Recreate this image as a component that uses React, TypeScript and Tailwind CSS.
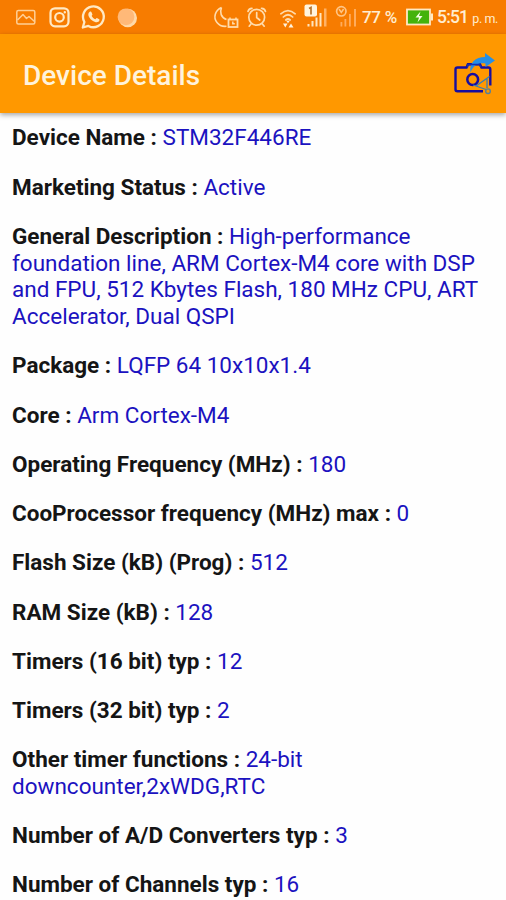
const details = [
  { label: "Device Name", value: "STM32F446RE" },
  { label: "Marketing Status", value: "Active" },
  {
    label: "General Description",
    value:
      "High-performance foundation line, ARM Cortex-M4 core with DSP and FPU, 512 Kbytes Flash, 180 MHz CPU, ART Accelerator, Dual QSPI",
  },
  { label: "Package", value: "LQFP 64 10x10x1.4" },
  { label: "Core", value: "Arm Cortex-M4" },
  { label: "Operating Frequency (MHz)", value: "180" },
  { label: "CooProcessor frequency (MHz) max", value: "0" },
  { label: "Flash Size (kB) (Prog)", value: "512" },
  { label: "RAM Size (kB)", value: "128" },
  { label: "Timers (16 bit) typ", value: "12" },
  { label: "Timers (32 bit) typ", value: "2" },
  { label: "Other timer functions", value: "24-bit downcounter,2xWDG,RTC" },
  { label: "Number of A/D Converters typ", value: "3" },
  { label: "Number of Channels typ", value: "16" },
];

function NotificationIcons() {
  return (
    <svg width="150" height="34" viewBox="0 0 150 34" fill="none" stroke="#ffe9c4" className="shrink-0">
      <g stroke="#ffcf95" strokeWidth="1.5" strokeLinejoin="round">
        <rect x="16.8" y="10.5" width="18" height="13.5" rx="1.5" />
        <path d="M17.5 20l5.5-5.5 3.5 4 2.5-2 5.5 5" />
      </g>
      <g strokeWidth="2.2">
        <rect x="50.5" y="8.3" width="18" height="18" rx="4.5" />
        <circle cx="59.5" cy="17.3" r="4.3" />
        <circle cx="64.8" cy="12.2" r="0.6" strokeWidth="1.2" />
      </g>
      <path d="M82.8 27.5l1.6-5.5a10.4 10.4 0 1 1 4 3.9z" strokeWidth="2.3" strokeLinejoin="round" />
      <path
        d="M89.5 12c.9-.8 1.7-.6 2 .2l.9 2c.2.7-.9 1.3-.7 1.8.8 1.6 2 2.6 3.6 3.2.5.2 1-1.3 1.6-1.1l2.3 1.1c.7.4.1 2-.8 2.6-1.6 1-3.8.3-6.2-1.4-2.2-1.7-4-4-3.9-6 0-1 .5-1.8 1.2-2.4z"
        fill="#ffe9c4"
        stroke="none"
      />
      <circle cx="127.8" cy="18" r="9.2" fill="#ffd9a8" stroke="none" />
      <circle cx="126" cy="16.8" r="8.4" fill="#ffb978" stroke="none" />
    </svg>
  );
}

function ConnectionIcons() {
  return (
    <svg width="146" height="34" viewBox="212 0 146 34" fill="none" stroke="#ffdcac" className="shrink-0">
      <path d="M221.5 7.5C215 10.5 213 17.5 217 22.5q3.5 4.5 9.5 3.8M221.5 7.5c-2 5-.5 10 5 12" strokeWidth="1.6" />
      <rect x="228.5" y="19.5" width="9" height="7.5" strokeWidth="1.8" />
      <path d="M230 17.5v2M236 17.5v2M232.8 21.5v2.2h2" strokeWidth="1.5" />
      <g strokeWidth="1.7" strokeLinecap="round">
        <circle cx="256.7" cy="17.3" r="7.9" />
        <path d="M256.7 12.5v5l3 2.5M248 11.5a4 4 0 0 1 4-3.2M265.5 11.5a4 4 0 0 0-4-3.2M251 24l-1.8 2.2M262.4 24l1.8 2.2" />
        <path d="M280.8 13.8q7.2-6.5 14.4 0M283.3 17q4.7-4.5 9.4 0M285.8 20q2.2-2 4.4 0" />
      </g>
      <path d="M286.2 20.8h3.6l-1.8 2.4zM283 23.5h4.5l-2.2 4zM291 23.5l2.5 4h-5z" fill="#fff2dc" stroke="none" />
      <rect x="304.5" y="4.5" width="12.5" height="12" rx="2" fill="#fff4df" stroke="none" />
      <path d="M309 8.5l2-1v7" stroke="#b8752f" strokeWidth="1.7" />
      <g stroke="none" fill="#ffe5bf">
        <rect x="307.5" y="24" width="2" height="2.5" />
        <rect x="311.5" y="21" width="2" height="5.5" />
        <rect x="315.5" y="17.5" width="2" height="9" />
        <rect x="319.5" y="13" width="2" height="13.5" />
        <rect x="324" y="8.5" width="2.5" height="18" fill="#ffb266" />
      </g>
      <circle cx="341.3" cy="11.3" r="4.7" stroke="#ffc584" strokeWidth="1.7" />
      <path d="M339 9l2.3 3.500 2.3-3.500" stroke="#ffc584" strokeWidth="1.5" />
      <g stroke="none" fill="#ffac5c">
        <rect x="340.5" y="22" width="1.8" height="4.5" />
        <rect x="344.5" y="19" width="1.8" height="7.5" />
        <rect x="349" y="14" width="1.8" height="12.5" />
        <rect x="354" y="9" width="2" height="17.5" />
      </g>
    </svg>
  );
}

function BatteryIcon() {
  return (
    <svg width="28" height="18" viewBox="0 0 28 18" className="shrink-0">
      <rect x="1" y="1.5" width="23" height="15" fill="#43b30b" stroke="#ffe9c4" strokeWidth="1.8" />
      <rect x="25" y="5.5" width="2" height="7" fill="#ffe9c4" />
      <path d="M14.5 3.5l-5 6h3.5l-1.5 5 5-6.5h-3.5z" fill="#f4ffe4" />
    </svg>
  );
}

function ShareCameraIcon() {
  return (
    <svg width="44" height="44" viewBox="452 52 44 44" fill="none" className="block">
      <path
        d="M490.3 85.5V69.5q0-2-2-2h-6.8l-1.5-3.3h-12l-1.5 3.3h-9q-2 0-2 2v19.8q0 2 2 2H483"
        stroke="#170da0"
        strokeWidth="2.4"
      />
      <circle cx="472.7" cy="79.5" r="5.4" stroke="#170da0" strokeWidth="2.5" />
      <path d="M470.5 72.5c-1.5-10 5-15.5 14.5-15.500v-4l10 7.500-9.500 6.500v-3.500c-7-.8-11.500 1-15 9z" fill="#268fe6" />
      <path d="M467.500 67.500v-3h12l1.500 3" stroke="#1530b0" strokeWidth="1.5" />
      <path d="M476 86l13.5-9.5M473 85l13 4.5M487 79v9" stroke="#347db8" strokeWidth="1.3" />
      <circle cx="488" cy="91.2" r="2.3" stroke="#567f9a" strokeWidth="1.4" />
    </svg>
  );
}

function StatusBar() {
  return (
    <div className="flex h-[34px] items-center bg-[#f77c00] text-[#ffedd0]">
      <NotificationIcons />
      <div className="ml-[62px] flex items-center">
        <ConnectionIcons />
        <span className="ml-1 w-11 whitespace-nowrap pt-0.5 text-[17px] font-medium tracking-[-0.3px]">77 %</span>
        <BatteryIcon />
        <div className="ml-[3px] flex items-baseline gap-1 whitespace-nowrap pt-px">
          <span className="text-[17.5px] font-medium tracking-[-0.8px]">5:51</span>
          <span className="text-[12.5px] tracking-[-0.4px]">p. m.</span>
        </div>
      </div>
    </div>
  );
}

export default function App() {
  return (
    <main className="h-[900px] w-[506px] overflow-hidden bg-[#fefefe] font-[Roboto,sans-serif]">
      <StatusBar />
      <header className="flex h-[79px] items-center justify-between bg-[#ff9800] pl-[23px] pr-[10px] shadow-[0_2px_5px_rgba(0,0,0,0.35)]">
        <h1 className="pt-1 text-[28px] font-medium text-[#fff3dc]">Device Details</h1>
        <button type="button" aria-label="Share screenshot">
          <ShareCameraIcon />
        </button>
      </header>

      <dl className="flex flex-col gap-[22.55px] px-3 pt-[11.4px] text-[22.5px] leading-[26.7px]">
        {details.map((item) => (
          <div key={item.label}>
            <dt className="inline font-bold text-[#151515]">{item.label} : </dt>
            <dd className="inline text-[#1b12c0]">{item.value}</dd>
          </div>
        ))}
      </dl>
    </main>
  );
}
